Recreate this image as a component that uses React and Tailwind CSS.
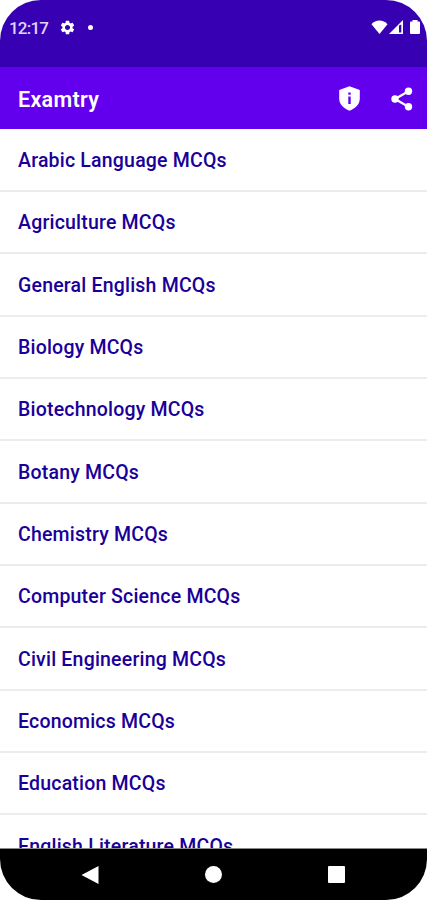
import { MdSettings } from "react-icons/md";

const subjects = [
    "Arabic Language MCQs",
    "Agriculture MCQs",
    "General English MCQs",
    "Biology MCQs",
    "Biotechnology MCQs",
    "Botany MCQs",
    "Chemistry MCQs",
    "Computer Science MCQs",
    "Civil Engineering MCQs",
    "Economics MCQs",
    "Education MCQs",
    "English Literature MCQs",
];

function StatusBar() {
    return (
        <div className="flex h-[67px] shrink-0 items-start justify-between bg-[#3700b3] pt-[18px] pr-[7px] pl-[9px] text-white">
            <div className="flex h-[18px] items-center">
                <span className="w-[50px] pt-px text-[17px] leading-[18px] font-medium tracking-[-0.8px] text-[#e0d6fa]">12:17</span>
                <MdSettings size={17} />
                <span className="ml-[12px] h-[5px] w-[5px] rounded-full bg-white" />
            </div>
            <div className="flex h-[18px] items-center">
                <svg width="17" height="14" viewBox="0 0 17 14" fill="currentColor">
                    <path d="M8.5 14 0.5 4.2C2.6 1.900 5.400 0.600 8.500 0.600s5.900 1.300 8 3.600z" />
                </svg>
                <svg className="ml-px" width="14" height="14" viewBox="0 0 14 14">
                    <path d="M0 14 14 0v14z" fill="currentColor" />
                    <path d="M10 5.500v7h2.300V4.500z" fill="#3700b3" />
                </svg>
                <svg className="ml-[7px]" width="10" height="14" viewBox="0 0 10 14" fill="currentColor">
                    <path d="M2.500 0h5v1.500h1.500q1 0 1 1V13q0 1-1 1H1q-1 0-1-1V2.500q0-1 1-1h1.500z" />
                </svg>
            </div>
        </div>
    );
}

function AppBar() {
    return (
        <header className="flex h-[62px] shrink-0 items-center justify-between bg-[#6200ee] pr-[14px] pl-[18px] text-white">
            <h1 className="pt-[3px] text-[21.500px] leading-7 font-semibold tracking-[0.300px]">Examtry</h1>
            <div className="flex items-center pt-px">
                {/* Shield with the info mark cut out */}
                <svg width="22" height="25" viewBox="0 0 22 25">
                    <path d="M10.500 0.300 20.800 4v8.500c0 5.500-4.100 9.800-10.300 12.200C4.300 22.300 0.200 18 0.200 12.500V4z" fill="currentColor" />
                    <path d="M9.300 6.500h2.400v2.300H9.300zM9.300 10.600h2.400v7.400H9.300z" fill="#6200ee" />
                </svg>
                <svg className="ml-[30px]" width="22" height="24" viewBox="0 0 22 24" fill="currentColor">
                    <path d="M17.500 4.300 4 12l13.500 7.700" fill="none" stroke="currentColor" strokeWidth="2.300" />
                    <circle cx="17.500" cy="4.300" r="3.700" />
                    <circle cx="4" cy="12" r="3.700" />
                    <circle cx="17.500" cy="19.700" r="3.700" />
                </svg>
            </div>
        </header>
    );
}

function NavigationBar() {
    return (
        <nav className="grid h-[52px] shrink-0 grid-cols-[90px_1fr_90px] items-center border-t border-[#8a8a8a] bg-black px-[45px] text-white">
            <svg className="justify-self-center" width="18" height="20" viewBox="0 0 18 20" fill="currentColor">
                <path d="M17.500 1v18L0.500 10z" />
            </svg>
            <span className="h-[17px] w-[17px] justify-self-center rounded-full bg-white" />
            <span className="ml-9 h-[17px] w-[17px] rounded-[1px] bg-white" />
        </nav>
    );
}

export default function App() {
    return (
        <div className="h-[900px] w-[427px] bg-white font-['Roboto',sans-serif]">
            <div className="flex h-full flex-col overflow-hidden rounded-[41px] bg-white">
                <StatusBar />
                <AppBar />
                <main className="min-h-0 flex-1 overflow-hidden pt-[0.500px]">
                    <ul>
                        {subjects.map((subject) => (
                            <li
                                key={subject}
                                className="flex h-[62.350px] items-center border-b-2 border-[#ececec] pt-[2px] pl-[18px] text-[19.500px] font-medium tracking-[0.200px] text-[#1a0099]"
                            >
                                {subject}
                            </li>
                        ))}
                    </ul>
                </main>
                <NavigationBar />
            </div>
        </div>
    );
}
